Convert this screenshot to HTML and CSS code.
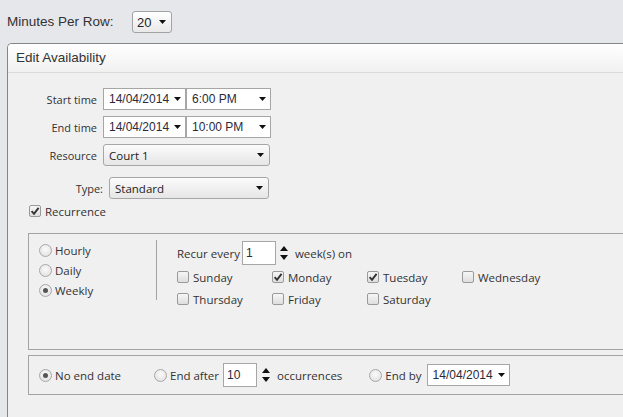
FILE: index.html
```html
<!DOCTYPE html>
<html>
<head>
<meta charset="utf-8">
<link rel="stylesheet" href="styles.css">
</head>
<body>
<div class="toolbar">
  <span class="tb-label">Minutes Per Row:</span>
  <div class="tb-select"><span>20</span><svg class="caret" width="7" height="4" viewBox="0 0 7 4"><path d="M0 0h7L3.5 4z"/></svg></div>
</div>
<div class="panel">
  <div class="panel-head">Edit Availability</div>
  <div class="panel-body">
    <div class="form-row">
      <span class="lbl">Start time</span>
      <div class="dd date"><span>14/04/2014</span><svg class="caret" width="7" height="4" viewBox="0 0 7 4"><path d="M0 0h7L3.5 4z"/></svg></div>
      <div class="dd time"><span>6:00 PM</span><svg class="caret" width="7" height="4" viewBox="0 0 7 4"><path d="M0 0h7L3.5 4z"/></svg></div>
    </div>
    <div class="form-row">
      <span class="lbl">End time</span>
      <div class="dd date"><span>14/04/2014</span><svg class="caret" width="7" height="4" viewBox="0 0 7 4"><path d="M0 0h7L3.5 4z"/></svg></div>
      <div class="dd time"><span>10:00 PM</span><svg class="caret" width="7" height="4" viewBox="0 0 7 4"><path d="M0 0h7L3.5 4z"/></svg></div>
    </div>
    <div class="form-row">
      <span class="lbl">Resource</span>
      <div class="sel resource"><span>Court 1</span><svg class="caret" width="7" height="4" viewBox="0 0 7 4"><path d="M0 0h7L3.5 4z"/></svg></div>
    </div>
    <div class="form-row type-row">
      <span class="lbl">Type:</span>
      <div class="sel type"><span>Standard</span><svg class="caret" width="7" height="4" viewBox="0 0 7 4"><path d="M0 0h7L3.5 4z"/></svg></div>
    </div>
    <div class="chk-row">
      <span class="cb checked"><svg width="10" height="10" viewBox="0 0 10 10"><path d="M1.6 5.2L4 7.8L8.6 1.8"/></svg></span>
      <span>Recurrence</span>
    </div>

    <div class="recur-box">
      <div class="pattern">
        <div class="radio-row"><span class="rb"></span><span>Hourly</span></div>
        <div class="radio-row"><span class="rb"></span><span>Daily</span></div>
        <div class="radio-row"><span class="rb on"></span><span>Weekly</span></div>
      </div>
      <div class="sep"></div>
      <div class="detail">
        <div class="recur-line">
          <span>Recur every</span>
          <div class="num"><span>1</span></div>
          <span class="spin"><svg width="8" height="5" viewBox="0 0 8 5"><path d="M0 5h8L4 0z"/></svg><svg width="8" height="5" viewBox="0 0 8 5"><path d="M0 0h8L4 5z"/></svg></span>
          <span class="after-spin">week(s) on</span>
        </div>
        <div class="days">
          <div class="day"><span class="cb"></span><span>Sunday</span></div>
          <div class="day"><span class="cb checked"><svg width="10" height="10" viewBox="0 0 10 10"><path d="M1.6 5.2L4 7.8L8.6 1.8"/></svg></span><span>Monday</span></div>
          <div class="day"><span class="cb checked"><svg width="10" height="10" viewBox="0 0 10 10"><path d="M1.6 5.2L4 7.8L8.6 1.8"/></svg></span><span>Tuesday</span></div>
          <div class="day"><span class="cb"></span><span>Wednesday</span></div>
          <div class="day"><span class="cb"></span><span>Thursday</span></div>
          <div class="day"><span class="cb"></span><span>Friday</span></div>
          <div class="day"><span class="cb"></span><span>Saturday</span></div>
        </div>
      </div>
    </div>

    <div class="ends-box">
      <div class="end-group g1"><span class="rb on"></span><span>No end date</span></div>
      <div class="end-group g2">
        <span class="rb"></span><span>End after</span>
        <div class="num small"><span>10</span></div>
        <span class="spin"><svg width="8" height="5" viewBox="0 0 8 5"><path d="M0 5h8L4 0z"/></svg><svg width="8" height="5" viewBox="0 0 8 5"><path d="M0 0h8L4 5z"/></svg></span>
        <span class="after-spin">occurrences</span>
      </div>
      <div class="end-group g3">
        <span class="rb"></span><span>End by</span>
        <div class="dd date endby"><span>14/04/2014</span><svg class="caret" width="7" height="4" viewBox="0 0 7 4"><path d="M0 0h7L3.5 4z"/></svg></div>
      </div>
    </div>
  </div>
</div>
</body>
</html>
```

FILE: styles.css
```css
html, body {
  margin: 0;
  padding: 0;
}
body {
  background: #e6e7eb;
  width: 623px;
  height: 417px;
  overflow: hidden;
  font-family: "Liberation Sans", Arial, sans-serif;
  color: #333;
}
.toolbar {
  height: 43px;
  box-sizing: border-box;
  padding: 11px 0 0 7px;
  display: flex;
  align-items: flex-start;
}
.tb-label {
  font-size: 13.5px;
  line-height: 22px;
  width: 125px;
  color: #333;
}
.tb-select {
  width: 40px;
  height: 22px;
  box-sizing: border-box;
  border: 1px solid #a3a3a3;
  border-radius: 3px;
  background: linear-gradient(#ffffff, #e9e9e9);
  display: flex;
  align-items: center;
  padding-left: 4px;
  font-size: 13px;
  color: #222;
}
.tb-select .caret { margin-left: 8px; }
.caret path, .spin path { fill: #111; }

.panel {
  margin-left: 7px;
  width: 680px;
  height: 374px;
  box-sizing: border-box;
  border: 1px solid #858585;
  border-right: none;
  border-bottom: none;
  border-top-left-radius: 5px;
  background: #f0f0f0;
  overflow: hidden;
}
.panel-head {
  height: 29px;
  box-sizing: border-box;
  border-bottom: 1px solid #d9d9d9;
  background: linear-gradient(#ffffff, #f1f1f1);
  padding-left: 8px;
  font-size: 13.5px;
  line-height: 28px;
  color: #333;
}
.panel-body {
  padding-top: 15px;
  font-family: "Open Sans", "Noto Sans", sans-serif;
  font-size: 11px;
  color: #333;
}
.form-row {
  display: flex;
  align-items: center;
  height: 22px;
  margin-bottom: 6px;
}
.lbl {
  width: 89px;
  text-align: right;
  margin-right: 6px;
}
.type-row {
  margin-top: 11px;
  padding-left: 6px;
  margin-bottom: 4px;
}
.type-row .lbl { width: 89px; }
.dd {
  height: 22px;
  box-sizing: border-box;
  border: 1px solid #a6a6a6;
  background: #fff;
  display: flex;
  align-items: center;
  justify-content: space-between;
  padding: 0 4px 0 5px;
  font-family: "Liberation Sans", Arial, sans-serif;
  font-size: 12px;
  color: #2a2a3a;
}
.dd.date { width: 83px; }
.dd.time { width: 85px; padding-left: 5px; }
.sel {
  height: 22px;
  box-sizing: border-box;
  border: 1px solid #a6a6a6;
  border-radius: 3px;
  background: linear-gradient(#fbfbfb, #e6e6e6);
  display: flex;
  align-items: center;
  justify-content: space-between;
  padding: 0 5px 0 5px;
  font-size: 11.5px;
  color: #222;
}
.sel.resource { width: 167px; }
.sel.type { width: 160px; }

.chk-row {
  display: flex;
  align-items: center;
  height: 16px;
  margin-left: 21px;
  gap: 4px;
  font-size: 11.5px;
}
.cb {
  width: 12px;
  height: 12px;
  box-sizing: border-box;
  border: 1px solid #9a9a9a;
  border-radius: 2px;
  background: linear-gradient(#f6f6f6, #dedede);
  display: inline-flex;
  align-items: center;
  justify-content: center;
  flex: none;
}
.cb svg path {
  fill: none;
  stroke: #333;
  stroke-width: 1.9;
}
.rb {
  width: 13px;
  height: 13px;
  box-sizing: border-box;
  border: 1px solid #a8a8a8;
  border-radius: 50%;
  background: radial-gradient(circle at 50% 40%, #fbfbfb, #dcdcdc);
  display: inline-flex;
  align-items: center;
  justify-content: center;
  flex: none;
}
.rb.on::after {
  content: "";
  width: 5px;
  height: 5px;
  border-radius: 50%;
  background: #555;
}

.recur-box {
  margin-top: 14px;
  margin-left: 20px;
  height: 117px;
  box-sizing: border-box;
  border: 1px solid #a3a3a3;
  border-right: none;
  display: flex;
  align-items: flex-start;
}
.pattern {
  width: 117px;
  padding: 6px 0 0 10px;
  font-size: 11.5px;
}
.radio-row {
  display: flex;
  align-items: center;
  height: 20px;
  gap: 3px;
}
.sep {
  width: 1px;
  height: 60px;
  margin-top: 6px;
  background: #a3a3a3;
}
.detail {
  padding: 7px 0 0 20px;
  font-size: 11.5px;
}
.recur-line {
  display: flex;
  align-items: center;
  height: 24px;
}
.num {
  height: 24px;
  box-sizing: border-box;
  border: 1px solid #a6a6a6;
  background: #fff;
  display: flex;
  align-items: center;
  padding-left: 3px;
  font-family: "Liberation Sans", Arial, sans-serif;
  font-size: 12px;
  color: #2a2a3a;
}
.recur-line .num { width: 34px; margin-left: 2px; }
.spin {
  display: inline-flex;
  flex-direction: column;
  gap: 4px;
  margin-left: 4px;
}
.after-spin { margin-left: 7px; }
.days {
  display: grid;
  grid-template-columns: repeat(4, 95px);
  grid-auto-rows: 22px;
  margin-top: 1px;
}
.day {
  display: flex;
  align-items: center;
  gap: 4px;
}

.ends-box {
  margin-top: 5px;
  margin-left: 20px;
  height: 40px;
  box-sizing: border-box;
  border: 1px solid #a3a3a3;
  border-right: none;
  display: flex;
  align-items: center;
  padding-left: 10px;
  font-size: 11.5px;
}
.end-group {
  display: flex;
  align-items: center;
  gap: 3px;
}
.g1 { width: 115px; }
.g2 .num.small { width: 34px; height: 24px; margin-left: 1px; }
.g2 .spin { margin-left: 2px; }
.g2 .after-spin { margin-left: 4px; }
.g3 { margin-left: 27px; }
.g3 .endby { margin-left: 2px; }
```
